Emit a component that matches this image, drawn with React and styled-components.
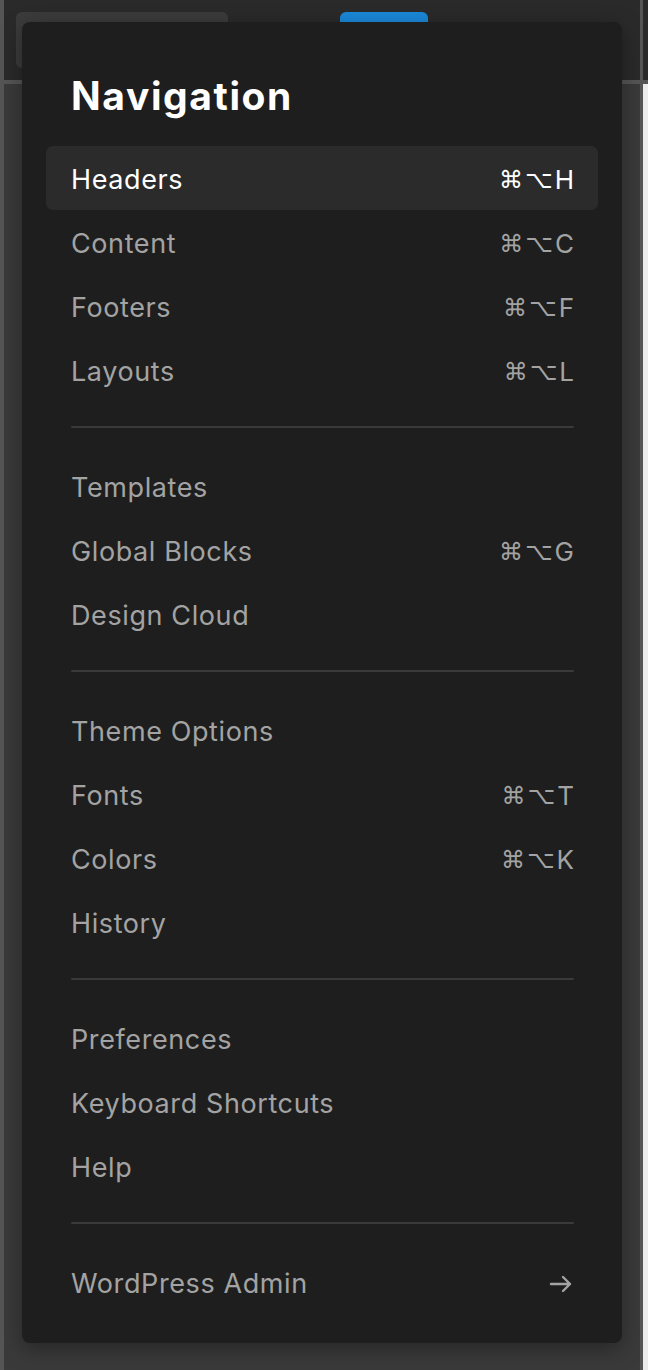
import React from 'react';
import styled, { createGlobalStyle } from 'styled-components';

const GlobalStyle = createGlobalStyle`
  html, body {
    margin: 0;
    padding: 0;
    background: #3a3a3a;
  }
  * {
    box-sizing: border-box;
  }
`;

const Shell = styled.div`
  position: relative;
  width: 648px;
  height: 1370px;
  display: flex;
  overflow: hidden;
  font-family: Inter, 'Noto Sans', sans-serif;
`;

const LeftRail = styled.div`
  width: 4px;
  background: #555555;
`;

const Workspace = styled.div`
  flex: 1;
  display: flex;
  flex-direction: column;
`;

const TopBar = styled.div`
  height: 84px;
  background: #2a2a2a;
  border-bottom: 4px solid #555555;
  display: flex;
  align-items: flex-start;
  padding: 12px 12px 0;
  gap: 112px;
`;

const BarButton = styled.div`
  width: ${(p) => p.w}px;
  height: 56px;
  border-radius: 6px;
  background: ${(p) => (p.primary ? '#1a88d8' : '#3b3b3b')};
`;

const Canvas = styled.div`
  flex: 1;
  background: #3a3a3a;
`;

const RightRail = styled.div`
  width: 8px;
  display: flex;
  flex-direction: column;
  border-left: 3px solid #555555;
`;

const RailTop = styled.div`
  height: 80px;
  background: #2a2a2a;
`;

const RailBottom = styled.div`
  flex: 1;
  background: #ececec;
  border-top: 4px solid #555555;
`;

const Menu = styled.nav`
  position: absolute;
  top: 22px;
  left: 22px;
  width: 600px;
  height: 1321px;
  background: #1e1e1e;
  border-radius: 8px;
  box-shadow: 0 6px 22px rgba(0, 0, 0, 0.35);
  padding: 0 24px;
  display: flex;
  flex-direction: column;
`;

const Title = styled.h2`
  margin: 0;
  padding: 52px 25px 0;
  height: 124px;
  font-size: 39px;
  font-weight: 700;
  letter-spacing: 1.6px;
  color: #ffffff;
  line-height: 44px;
`;

const Item = styled.div`
  height: 64px;
  display: flex;
  align-items: center;
  justify-content: space-between;
  padding: 3px 24px 0 25px;
  border-radius: 7px;
  background: ${(p) => (p.active ? '#2b2b2b' : 'transparent')};
  color: ${(p) => (p.active ? '#ffffff' : '#a3a3a3')};
  font-size: 27px;
  font-weight: 400;
  letter-spacing: 0.6px;
`;

const Shortcut = styled.span`
  font-family: 'DejaVu Sans', Inter, sans-serif;
  font-size: 24px;
  letter-spacing: 2px;
  display: flex;
  align-items: center;
`;

const Key = styled.span`
  font-family: Inter, sans-serif;
  font-size: 26px;
  letter-spacing: 0;
`;

const Divider = styled.hr`
  margin: 24px 24px 26px 25px;
  border: 0;
  height: 2px;
  border-radius: 1px;
  background: #3a3a3a;
`;

const Arrow = () => (
  <svg width="26" height="20" viewBox="0 0 26 20" fill="none" stroke="#a3a3a3" strokeWidth="2.4" strokeLinecap="round" strokeLinejoin="round">
    <path d="M3 10 H22 M15 3 L22 10 L15 17" />
  </svg>
);

const groups = [
  [
    { label: 'Headers', key: 'H', active: true },
    { label: 'Content', key: 'C' },
    { label: 'Footers', key: 'F' },
    { label: 'Layouts', key: 'L' },
  ],
  [
    { label: 'Templates' },
    { label: 'Global Blocks', key: 'G' },
    { label: 'Design Cloud' },
  ],
  [
    { label: 'Theme Options' },
    { label: 'Fonts', key: 'T' },
    { label: 'Colors', key: 'K' },
    { label: 'History' },
  ],
  [
    { label: 'Preferences' },
    { label: 'Keyboard Shortcuts' },
    { label: 'Help' },
  ],
];

const App = () => {
  return (
    <>
      <GlobalStyle />
      <Shell>
        <LeftRail />
        <Workspace>
          <TopBar>
            <BarButton w={212} />
            <BarButton w={88} primary />
          </TopBar>
          <Canvas />
        </Workspace>
        <RightRail>
          <RailTop />
          <RailBottom />
        </RightRail>

        <Menu>
          <Title>Navigation</Title>
          {groups.map((group, i) => (
            <React.Fragment key={i}>
              {group.map((item) => (
                <Item key={item.label} active={item.active}>
                  <span>{item.label}</span>
                  {item.key && (
                    <Shortcut>
                      ⌘⌥<Key>{item.key}</Key>
                    </Shortcut>
                  )}
                </Item>
              ))}
              <Divider />
            </React.Fragment>
          ))}
          <Item>
            <span>WordPress Admin</span>
            <Arrow />
          </Item>
        </Menu>
      </Shell>
    </>
  );
};

export default App;
